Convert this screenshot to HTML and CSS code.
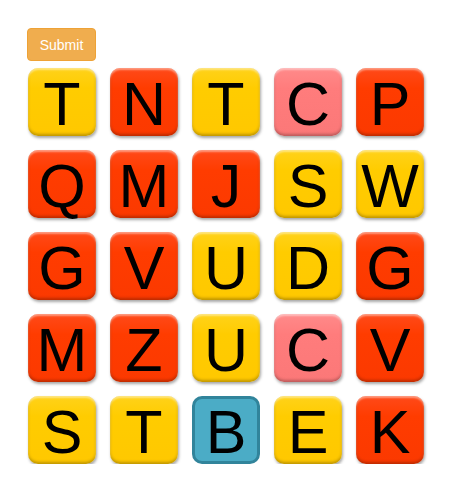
FILE: index.html
```html
<!DOCTYPE html>
<html>
<head>
<meta charset="utf-8">
<link rel="stylesheet" href="styles.css">
</head>
<body>
<div class="page">
  <button class="submit">Submit</button>
  <div class="board">
    <div class="tile y">T</div><div class="tile r">N</div><div class="tile y">T</div><div class="tile p">C</div><div class="tile r">P</div>
    <div class="tile r">Q</div><div class="tile r">M</div><div class="tile r">J</div><div class="tile y">S</div><div class="tile y">W</div>
    <div class="tile r">G</div><div class="tile r">V</div><div class="tile y">U</div><div class="tile y">D</div><div class="tile r">G</div>
    <div class="tile r">M</div><div class="tile r">Z</div><div class="tile y">U</div><div class="tile p">C</div><div class="tile r">V</div>
    <div class="tile y">S</div><div class="tile y">T</div><div class="tile b">B</div><div class="tile y">E</div><div class="tile r">K</div>
  </div>
</div>
</body>
</html>
```
FILE: styles.css
```css
html, body { margin: 0; padding: 0; background: #fff; }
.page {
  padding: 28px 0 0 27px;
  font-family: "Liberation Sans", Arial, sans-serif;
}
.submit {
  display: block;
  width: 69px;
  height: 33px;
  background: #f0ad4e;
  border: 1px solid #eea236;
  border-radius: 4px;
  color: #fff;
  font-family: "Liberation Sans", Arial, sans-serif;
  font-size: 14px;
  padding: 0;
  margin: 0 0 7px 0;
}
.board {
  display: grid;
  grid-template-columns: repeat(5, 68px);
  grid-auto-rows: 68px;
  gap: 14px;
  padding-left: 1px;
}
.tile {
  box-sizing: border-box;
  width: 68px;
  height: 68px;
  border-radius: 10px;
  text-align: center;
  font-size: 61px;
  line-height: 63px;
  padding-top: 5px;
  color: #000;
  box-shadow: inset 0 2px 2px rgba(255,255,255,0.45), inset 0 -2px 3px rgba(0,0,0,0.25), 1px 2px 3px rgba(0,0,0,0.35);
}
.y { background: linear-gradient(#ffd21a, #ffcc00 30%, #ffc800); }
.r { background: linear-gradient(#ff4a1a, #ff3c00 30%, #fb3900); }
.p { background: linear-gradient(#ff8a8a, #ff7c7c 30%, #fb7878); }
.b {
  background: #4bacc6;
  border: 3px solid #31849b;
  padding-top: 2px;
  box-shadow: none;
}
```
